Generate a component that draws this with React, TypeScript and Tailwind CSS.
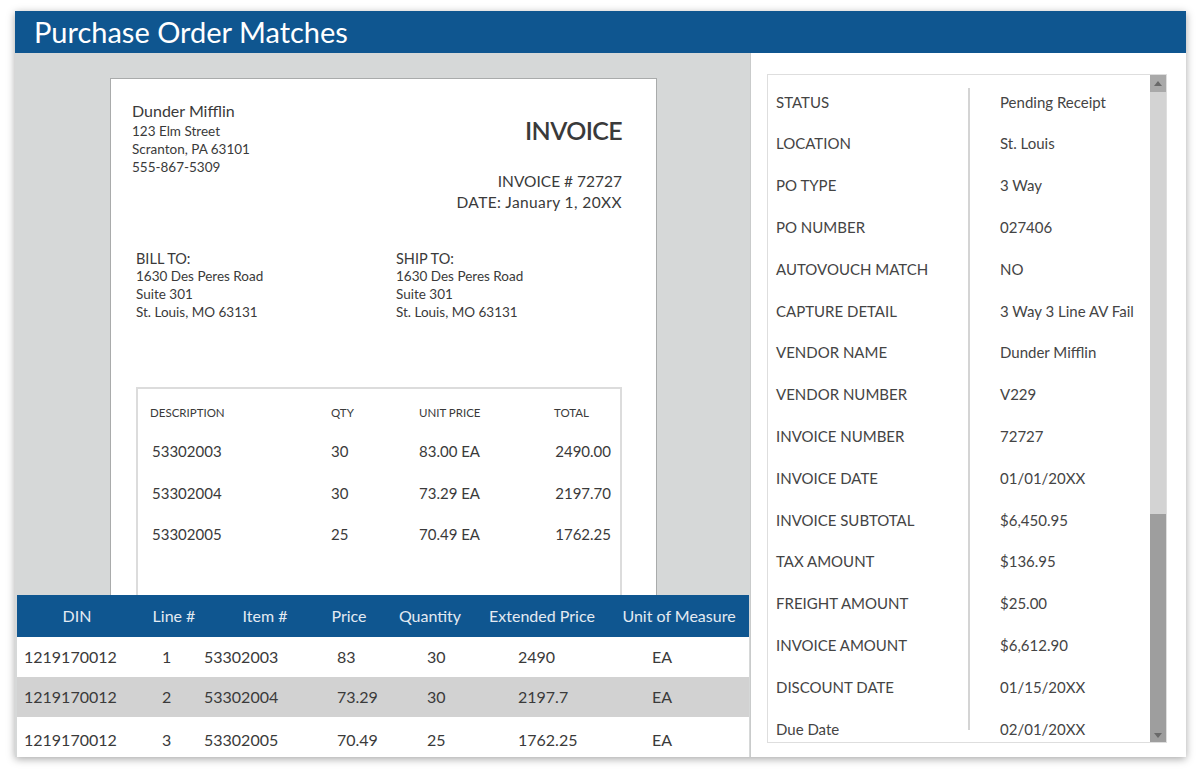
const font = { fontFamily: "Lato, 'Liberation Sans', sans-serif" };

const details: [string, string][] = [
  ["STATUS", "Pending Receipt"],
  ["LOCATION", "St. Louis"],
  ["PO TYPE", "3 Way"],
  ["PO NUMBER", "027406"],
  ["AUTOVOUCH MATCH", "NO"],
  ["CAPTURE DETAIL", "3 Way 3 Line AV Fail"],
  ["VENDOR NAME", "Dunder Mifflin"],
  ["VENDOR NUMBER", "V229"],
  ["INVOICE NUMBER", "72727"],
  ["INVOICE DATE", "01/01/20XX"],
  ["INVOICE SUBTOTAL", "$6,450.95"],
  ["TAX AMOUNT", "$136.95"],
  ["FREIGHT AMOUNT", "$25.00"],
  ["INVOICE AMOUNT", "$6,612.90"],
  ["DISCOUNT DATE", "01/15/20XX"],
  ["Due Date", "02/01/20XX"],
];

const invoiceLines = [
  ["53302003", "30", "83.00 EA", "2490.00"],
  ["53302004", "30", "73.29 EA", "2197.70"],
  ["53302005", "25", "70.49 EA", "1762.25"],
];

const matches = [
  ["1219170012", "1", "53302003", "83", "30", "2490", "EA"],
  ["1219170012", "2", "53302004", "73.29", "30", "2197.7", "EA"],
  ["1219170012", "3", "53302005", "70.49", "25", "1762.25", "EA"],
];

function Invoice() {
  return (
    <div className="min-h-0 flex-1 overflow-hidden pl-[95px] pt-[25px]">
      <div className="h-[600px] w-[547px] border border-b-0 border-[#a9abab] bg-white text-[#3a3a3a]">
        <div className="flex justify-between pl-[21px] pr-[34px] pt-[23px]">
          <div>
            <div className="text-[16px] leading-[18px]">Dunder Mifflin</div>
            <div className="mt-[2px] text-[13.5px] leading-[18px]">
              123 Elm Street<br />
              Scranton, PA 63101<br />
              555-867-5309
            </div>
          </div>
          <div className="text-right">
            <div className="mt-[14px] text-[25px] font-semibold leading-[28px] tracking-tight">INVOICE</div>
            <div className="mt-[27px] text-[15.5px] leading-[21px]">
              INVOICE # 72727<br />
              <span className="tracking-[0.4px]">DATE: January 1, 20XX</span>
            </div>
          </div>
        </div>

        <div className="mt-[37px] flex pl-[25px] text-[13.5px] leading-[18px]">
          <div className="w-[260px]">
            <div className="text-[14.5px] leading-[17px]">BILL TO:</div>
            1630 Des Peres Road<br />
            Suite 301<br />
            St. Louis, MO 63131
          </div>
          <div>
            <div className="text-[14.5px] leading-[17px]">SHIP TO:</div>
            1630 Des Peres Road<br />
            Suite 301<br />
            St. Louis, MO 63131
          </div>
        </div>

        <div className="ml-[25px] mt-[66px] h-[240px] w-[486px] border-2 border-b-0 border-[#dcdcdc] pl-[12px] pr-[9px] pt-[16px]">
          <div className="grid grid-cols-[181px_88px_120px_1fr] text-[11.5px] leading-[16px]">
            <span>DESCRIPTION</span>
            <span>QTY</span>
            <span>UNIT PRICE</span>
            <span className="pl-[15px]">TOTAL</span>
          </div>
          {invoiceLines.map((r, i) => (
            <div
              key={r[0]}
              className={`grid grid-cols-[181px_88px_120px_1fr] text-[15px] leading-[20px] ${i === 0 ? "mt-[20px]" : i === 1 ? "mt-[22px]" : "mt-[21px]"}`}
            >
              <span className="pl-[2px]">{r[0]}</span>
              <span>{r[1]}</span>
              <span>{r[2]}</span>
              <span className="text-right">{r[3]}</span>
            </div>
          ))}
        </div>
      </div>
    </div>
  );
}

function MatchTable() {
  const head = "grid grid-cols-[120px_74px_108px_60px_102px_122px_1fr]";
  const row = "grid grid-cols-[138px_42px_133px_90px_91px_134px_1fr]";
  return (
    <div className="ml-[2px] w-[732px] shrink-0">
      <div className={`${head} h-[42px] items-center bg-[#0f5690] text-center text-[16px] text-[#e3eaf2]`}>
        <span>DIN</span>
        <span>Line #</span>
        <span>Item #</span>
        <span>Price</span>
        <span>Quantity</span>
        <span>Extended Price</span>
        <span className="pl-[6px]">Unit of Measure</span>
      </div>
      {matches.map((r, i) => (
        <div
          key={r[1]}
          className={`${row} h-[40px] items-center pl-[7px] text-[16px] text-[#3a3a3a] ${i === 1 ? "bg-[#d2d2d2]" : "bg-white"} ${i === 2 ? "pt-[6px]" : ""}`}
        >
          {r.map((c, j) => (
            <span key={j}>{c}</span>
          ))}
        </div>
      ))}
    </div>
  );
}

function Details() {
  return (
    <div className="flex h-full border-l border-[#c9cbcb] bg-white pb-[14px] pl-[16px] pr-[19px] pt-[21px]">
      <div className="flex flex-1 border border-[#dedede]">
        <div className="relative flex-1 pl-[8px] pt-[6px]">
          <div className="absolute bottom-[12px] left-[200px] top-[13px] w-[2px] bg-[#d4d4d4]" />
          {details.map(([k, v]) => (
            <div key={k} className="flex h-[41.8px] items-center text-[15px] text-[#444]">
              <span className="w-[224px]">{k}</span>
              <span>{v}</span>
            </div>
          ))}
        </div>
        <div className="flex w-[16px] flex-col bg-[#d3d3d3]">
          <div className="flex h-[17px] items-center justify-center bg-[#a9a9a9]">
            <svg width="8" height="5" viewBox="0 0 8 5">
              <path d="M0 5 L4 0 L8 5 Z" fill="#6a6a6a" />
            </svg>
          </div>
          <div className="flex-1" />
          <div className="flex h-[228px] flex-col justify-end bg-[#9e9e9e] pb-[4px]">
            <div className="flex justify-center">
              <svg width="8" height="5" viewBox="0 0 8 5">
                <path d="M0 0 L4 5 L8 0 Z" fill="#6a6a6a" />
              </svg>
            </div>
          </div>
        </div>
      </div>
    </div>
  );
}

export default function App() {
  return (
    <div className="h-[770px] w-[1200px] bg-white pl-[15px] pt-[11px]" style={font}>
      <div className="flex h-[746px] w-[1171px] flex-col shadow-[0_2px_8px_rgba(0,0,0,0.35)]">
        <div className="flex h-[42px] shrink-0 items-center bg-[#0f5690] pl-[19px] text-[29px] text-white">
          Purchase Order Matches
        </div>
        <div className="flex min-h-0 flex-1">
          <div className="flex w-[735px] flex-col bg-[#d6d8d8]">
            <Invoice />
            <MatchTable />
          </div>
          <div className="flex-1">
            <Details />
          </div>
        </div>
      </div>
    </div>
  );
}
